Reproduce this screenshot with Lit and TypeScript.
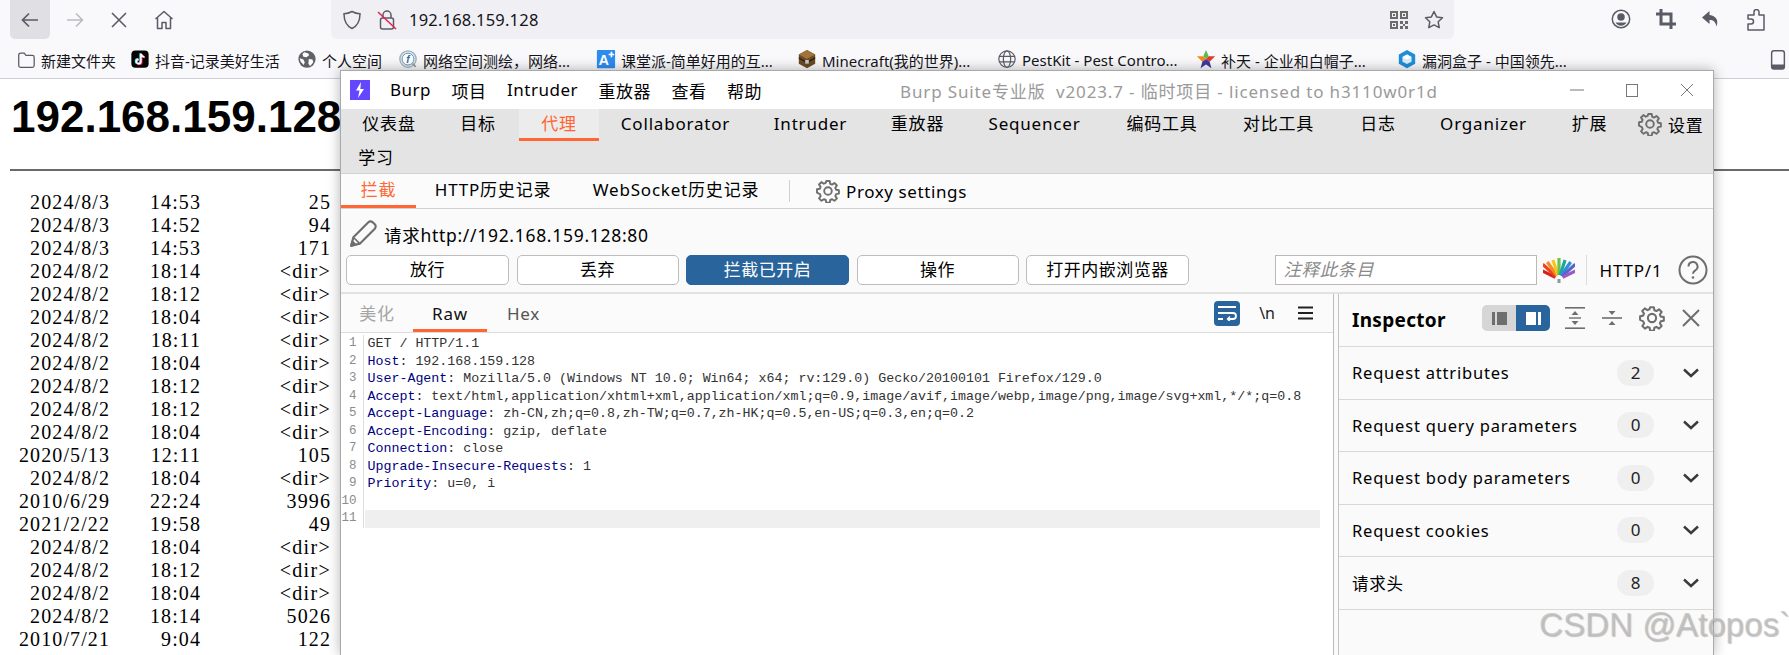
import { LitElement, html, css, svg } from "lit";
import { customElement } from "lit/decorators.js";

const UI = `"Noto Sans", "Noto Sans CJK SC", sans-serif`;

const bookmarks = [
  { icon: "folder", text: "新建文件夹", w: 114 },
  { icon: "tiktok", text: "抖音-记录美好生活", w: 167 },
  { icon: "earth", text: "个人空间", w: 101 },
  { icon: "fofa", text: "网络空间测绘，网络...", w: 198 },
  { icon: "ketang", text: "课堂派-简单好用的互...", w: 201 },
  { icon: "chest", text: "Minecraft(我的世界)...", w: 200 },
  { icon: "globe", text: "PestKit - Pest Contro...", w: 199 },
  { icon: "butian", text: "补天 - 企业和白帽子...", w: 201 },
  { icon: "box", text: "漏洞盒子 - 中国领先...", w: 371 },
  { icon: "phone", text: "移", w: 30 },
];

const listing = [
  ["2024/8/3", "14:53", "25"], ["2024/8/3", "14:52", "94"], ["2024/8/3", "14:53", "171"],
  ["2024/8/2", "18:14", "<dir>"], ["2024/8/2", "18:12", "<dir>"], ["2024/8/2", "18:04", "<dir>"],
  ["2024/8/2", "18:11", "<dir>"], ["2024/8/2", "18:04", "<dir>"], ["2024/8/2", "18:12", "<dir>"],
  ["2024/8/2", "18:12", "<dir>"], ["2024/8/2", "18:04", "<dir>"], ["2020/5/13", "12:11", "105"],
  ["2024/8/2", "18:04", "<dir>"], ["2010/6/29", "22:24", "3996"], ["2021/2/22", "19:58", "49"],
  ["2024/8/2", "18:04", "<dir>"], ["2024/8/2", "18:12", "<dir>"], ["2024/8/2", "18:04", "<dir>"],
  ["2024/8/2", "18:14", "5026"], ["2010/7/21", "9:04", "122"], ["2021/10/22", "16:30", "88"],
];

const mainTabs = [
  ["仪表盘", 96], ["目标", 82], ["代理", 80], ["Collaborator", 153], ["Intruder", 117], ["重放器", 97],
  ["Sequencer", 137], ["编码工具", 118], ["对比工具", 115], ["日志", 84], ["Organizer", 127], ["扩展", 85],
] as [string, number][];

const code: [string, string][] = [
  ["", "GET / HTTP/1.1"],
  ["Host", " 192.168.159.128"],
  ["User-Agent", " Mozilla/5.0 (Windows NT 10.0; Win64; x64; rv:129.0) Gecko/20100101 Firefox/129.0"],
  ["Accept", " text/html,application/xhtml+xml,application/xml;q=0.9,image/avif,image/webp,image/png,image/svg+xml,*/*;q=0.8"],
  ["Accept-Language", " zh-CN,zh;q=0.8,zh-TW;q=0.7,zh-HK;q=0.5,en-US;q=0.3,en;q=0.2"],
  ["Accept-Encoding", " gzip, deflate"],
  ["Connection", " close"],
  ["Upgrade-Insecure-Requests", " 1"],
  ["Priority", " u=0, i"],
  ["", ""],
  ["", ""],
];

const inspectorRows: [string, string][] = [
  ["Request attributes", "2"],
  ["Request query parameters", "0"],
  ["Request body parameters", "0"],
  ["Request cookies", "0"],
  ["请求头", "8"],
];

const gearPath =
  "M10.3 2h3.4l.5 2.8 1.9.8 2.4-1.6 2.4 2.4-1.6 2.4.8 1.9 2.8.5v3.4l-2.8.5-.8 1.9 1.6 2.4-2.4 2.4-2.4-1.6-1.9.8-.5 2.8h-3.4l-.5-2.8-1.9-.8-2.4 1.6-2.4-2.4 1.6-2.4-.8-1.9L1 13.7v-3.4l2.8-.5.8-1.9L3 5.5l2.4-2.4 2.4 1.6 1.9-.8z";

function gear(size: number) {
  return html`<svg width=${size} height=${size} viewBox="0 0 24 24" fill="none" stroke="#6e6e6e" stroke-width="1.9" stroke-linejoin="round"><path d=${gearPath}></path><circle cx="12" cy="12" r="3.8"></circle></svg>`;
}

function favicon(name: string) {
  switch (name) {
    case "folder":
      return svg`<path d="M2 5.5a2 2 0 0 1 2-2h4l2 2.5h7a2 2 0 0 1 2 2v9a2 2 0 0 1-2 2H4a2 2 0 0 1-2-2z" fill="none" stroke="#5b5b66" stroke-width="1.4"/>`;
    case "tiktok":
      return svg`<rect x="0.5" y="0.5" width="19" height="19" rx="4.5" fill="#050505"/>
        <path d="M11 4v8.6a2.5 2.5 0 1 1-2.5-2.5M11 4c.3 2 1.7 3.4 3.8 3.6" fill="none" stroke="#25f4ee" stroke-width="2" transform="translate(-.8 -.4)"/>
        <path d="M11 4v8.6a2.5 2.5 0 1 1-2.5-2.5M11 4c.3 2 1.7 3.4 3.8 3.6" fill="none" stroke="#fe2c55" stroke-width="2" transform="translate(.8 .6)"/>
        <path d="M11 4v8.6a2.5 2.5 0 1 1-2.5-2.5M11 4c.3 2 1.7 3.4 3.8 3.6" fill="none" stroke="#fff" stroke-width="1.7"/>`;
    case "earth":
      return svg`<circle cx="10" cy="10" r="9.5" fill="#5f6368"/>
        <path d="M7 2.5l4 1 1.5 2-3 2.5-3.5-.5-1-3zM12 10l4 .5 1 3-3.5 4-2-2.5zM2 9l4 1.500 1.500 3-1 3L3 13z" fill="#fff"/>`;
    case "fofa":
      return svg`<circle cx="10" cy="10" r="9" fill="#dfe8ee" stroke="#9fb0bb" stroke-width="1.400"/>
        <circle cx="10" cy="10" r="6.500" fill="#fff" stroke="#5e8fb5" stroke-width="1"/>
        <text x="10" y="14" font-size="11" font-weight="700" font-style="italic" text-anchor="middle" font-family="Liberation Sans" fill="#2f6ea5">f</text>
        <path d="M15 15l3.500 3.500" stroke="#9a9a9a" stroke-width="2"/>`;
    case "ketang":
      return svg`<rect width="20" height="20" rx="1" fill="#2d8cf0"/>
        <text x="7.500" y="17" font-size="16" font-weight="700" text-anchor="middle" font-family="Liberation Sans" fill="#fff">A</text>
        <path d="M13 5h6M16 2v6" stroke="#fff" stroke-width="1.800"/>`;
    case "chest":
      return svg`<path d="M10 0l9 5v10l-9 5-9-5V5z" fill="#6b4a24"/><path d="M10 0l9 5-9 5-9-5z" fill="#a0743c"/><path d="M1 8l9 5 9-5v1.500l-9 5-9-5z" fill="#2e1f0f"/><rect x="8" y="11" width="4" height="4" fill="#c8c8c8"/>`;
    case "globe":
      return svg`<g fill="none" stroke="#5b5b66" stroke-width="1.300"><circle cx="10" cy="10" r="9"/><ellipse cx="10" cy="10" rx="4" ry="9"/><path d="M1.500 7h17M1.500 13h17"/></g>`;
    case "butian":
      return svg`<path d="M10 0l3 7-3 3-3-3z" fill="#5cb85c"/><path d="M20 7l-7 0-3 3 4 3z" fill="#e23b2e"/><path d="M0 7h7l3 3-4 3z" fill="#f28a18"/><path d="M6 13l4-3 4 3 2 7-6-4-6 4z" fill="#3f3a9e"/>`;
    case "box":
      return svg`<path d="M10 0l9 5v10l-9 5-9-5V5z" fill="#1f8ed6"/><path d="M10 5l5 2.800v5L10 15.500 5 12.800v-5z" fill="#d6eefb"/><path d="M10 5l5 2.800-5 2.700-5-2.700z" fill="#fff"/>`;
    default:
      return svg`<rect x="3" y="0.800" width="14" height="20" rx="2.500" fill="none" stroke="#5b5b66" stroke-width="1.600"/><path d="M3 16h14v3a2 2 0 0 1-2 2H5a2 2 0 0 1-2-2z" fill="#5b5b66"/>`;
  }
}

function fan() {
  const colors = ["#d8201f", "#f0401f", "#f78a1c", "#f7c61d", "#6cc24a", "#19a7a0", "#2c8fd8", "#5a62c8", "#9b59c4"];
  return html`<svg class="fan" width="32" height="28" viewBox="0 0 32 28">
    ${colors.map((c, i) => {
      const a = ((i - 4) * 16 * Math.PI) / 180;
      const x = 16 + Math.sin(a) * 22;
      const y = 23 - Math.cos(a) * 22;
      const x0 = 16 + Math.sin(a) * 4;
      const y0 = 23 - Math.cos(a) * 4;
      return svg`<line x1=${x0} y1=${y0} x2=${x} y2=${Math.max(y, 2 + Math.abs(i - 4) * 2)} stroke=${c} stroke-width="3.200"/>`;
    })}
    <rect x="14.500" y="23" width="3" height="4" fill="#8a9aa5"></rect>
  </svg>`;
}

@customElement("app-root")
export class AppRoot extends LitElement {
  static styles = css`
    :host { display: block; width: 1789px; height: 655px; overflow: hidden; position: relative; background: #fff; font-family: ${css([UI] as any)}; color: #000; }
    svg { display: block; flex: none; }
    .toolbar { height: 39px; background: #f9f9fb; display: flex; align-items: center; padding-left: 10px; }
    .nav { width: 40px; height: 39px; margin-right: 4.5px; display: flex; align-items: center; justify-content: center; border-radius: 0 0 5px 5px; }
    .nav.on { background: #dfdfe4; }
    .addr { margin-left: 143px; width: 1123px; height: 39px; background: #f0f0f4; border-radius: 0 0 6px 6px; display: flex; align-items: center; padding-left: 11px; box-sizing: border-box; font-size: 16.500px; color: #15141a; }
    .addr .url { margin-left: 12px; flex: 1; letter-spacing: .2px; }
    .addr .end { display: flex; gap: 16px; margin-right: 10px; align-items: center; }
    .right { display: flex; margin-left: 155px; gap: 21px; padding-top: 1px; }
    .right div { width: 24px; display: flex; justify-content: center; }
    .bookmarks { height: 40px; box-sizing: border-box; background: #f9f9fb; border-bottom: 1px solid #cfcfd8; display: flex; align-items: center; padding-left: 16px; font-size: 15px; color: #15141a; overflow: hidden; padding-top: 3px; }
    .bm { display: flex; align-items: center; flex: none; gap: 5px; white-space: nowrap; }
    .page { padding-left: 10px; position: relative; }
    h1 { margin: 0; height: 90px; box-sizing: border-box; padding: 11px 0 0 1px; font: 700 44px/54px "Liberation Sans", sans-serif; white-space: nowrap; }
    hr { margin: 0 0 20px -0px; height: 2px; border: 0; background: #6a6a6a; width: 1779px; }
    .list { display: flex; flex-direction: column; font: 20px/23px "Liberation Serif", serif; letter-spacing: 1.100px; margin-left: -10px; }
    .rowl { display: grid; grid-template-columns: 110px 91px 130px; height: 23px; }
    .rowl span { text-align: right; white-space: pre; }
    .dir { letter-spacing: 1.300px; }

    .win { position: absolute; left: 340px; top: 70px; width: 1374px; height: 585px; box-sizing: border-box; background: #fafafa; border: 1px solid #a9a9a9; border-bottom: 0; box-shadow: 0 0 12px rgba(0,0,0,.3); display: flex; flex-direction: column; border-left-width: 1px; }
    .title { height: 38px; flex: none; background: #fff; display: flex; align-items: center; position: relative; font-size: 17px; letter-spacing: .5px; }
    .logo { margin-left: 9px; width: 20px; height: 20px; background: #6347ff; display: flex; align-items: center; justify-content: center; margin-right: 20px; }
    .menu { display: flex; gap: 20.500px; }
    .wintitle { margin-left: 138px; color: #9a9a9a; white-space: pre; letter-spacing: .85px; }
    .ctl { margin-left: auto; display: flex; align-items: center; gap: 42px; margin-right: 19px; }
    .maintabs { height: 65px; flex: none; background: #e4e4e4; border-bottom: 1px solid #cdd2d2; box-sizing: border-box; font-size: 17px; letter-spacing: .8px; }
    .trow { display: flex; height: 32px; }
    .tab { flex: none; text-align: center; line-height: 30px; box-sizing: border-box; height: 32px; white-space: nowrap; }
    .tab.on { color: #ff6633; border-bottom: 3px solid #ff6633; background: #ececec; }
    .settings { display: flex; align-items: center; margin-left: 6px; gap: 6px; height: 30px; }
    .tab2 { width: 70px; text-align: center; line-height: 32px; margin-top: 1px; }
    .subtabs { height: 35px; flex: none; box-sizing: border-box; border-bottom: 1px solid #cdd2d2; display: flex; align-items: center; font-size: 17px; letter-spacing: .8px; background: #fbfbfb; }
    .st { height: 34px; line-height: 32px; text-align: center; box-sizing: border-box; flex: none; white-space: nowrap; }
    .st.on { color: #ff6633; border-bottom: 3px solid #ff6633; }
    .vsep { width: 1px; height: 22px; background: #d0d0d0; margin: 0 26px 0 7px; }
    .proxy { display: flex; align-items: center; gap: 6px; letter-spacing: .6px; }
    .reqline { height: 46px; flex: none; display: flex; align-items: center; padding-left: 7px; gap: 6px; font-size: 17.500px; letter-spacing: .7px; box-sizing: border-box; padding-top: 4px; }
    .btns { height: 30px; flex: none; display: flex; align-items: center; padding-left: 5px; }
    .btn { height: 30px; box-sizing: border-box; border: 1px solid #bdbdbd; border-radius: 5px; background: #fff; text-align: center; line-height: 28px; font-size: 17px; letter-spacing: .5px; flex: none; margin-right: 7.500px; }
    .btn.on { background: #29659c; color: #fff; border-color: #29659c; }
    .note { margin-left: 78px; width: 262px; height: 30px; box-sizing: border-box; border: 1px solid #bdb8b8; background: #fff; font-style: italic; color: #8a8a8a; font-size: 17.500px; line-height: 27px; padding-left: 8px; letter-spacing: .6px; }
    .fan { margin-left: 6px; }
    .vs2 { width: 1px; height: 30px; background: #dcdcdc; margin: 0 13px 0 11px; }
    .http1 { font-size: 17px; letter-spacing: .8px; margin-right: 16px; }
    .bottom { flex: 1; display: flex; margin-top: 7px; border-top: 2px solid #e2e2e2; min-height: 0; background: #fff; }
    .editor { width: 993px; flex: none; box-sizing: border-box; border-right: 1px solid #bfbaba; display: flex; flex-direction: column; background: #fff; }
    .edhead { height: 38px; flex: none; border-bottom: 1px solid #dcdcdc; display: flex; align-items: center; font-size: 17px; letter-spacing: .8px; background: #fbfbfb; }
    .et { height: 38px; line-height: 40px; text-align: center; box-sizing: border-box; flex: none; color: #222; }
    .et.dim { color: #a5a5a5; }
    .et.hex { color: #555; }
    .et.on { border-bottom: 3px solid #ff6633; color: #111; }
    .edicons { margin-left: auto; display: flex; align-items: center; margin-right: 20px; }
    .wrap { width: 26px; height: 25px; background: #29659c; border-radius: 4px; display: flex; align-items: center; justify-content: center; margin-left: 1px; }
    .nl { margin: 0 23px 0 19px; font-size: 16px; color: #222; letter-spacing: 0; }
    .codewrap { flex: 1; padding-top: 2px; font: 13.300px/17.500px "Liberation Mono", monospace; position: relative; }
    .cl { display: flex; height: 17.500px; white-space: pre; }
    .num { width: 22.500px; flex: none; box-sizing: border-box; text-align: right; padding-right: 6px; color: #8c8c8c; border-right: 1px solid #ddd; font-size: 12.500px; }
    .txt { padding-left: 4px; color: #333; flex: none; }
    .txt b { font-weight: 400; color: #000080; }
    .cl.cur .txt { width: 951px; margin-left: 1px; background: #efefef; }
    .gutter { width: 4px; flex: none; background: #fafafa; border-right: 1px solid #c4c4c4; }
    .insp { flex: 1; background: #fafafa; display: flex; flex-direction: column; min-width: 0; }
    .ihead { height: 53px; box-sizing: border-box; flex: none; border-bottom: 1px solid #d8d8d8; display: flex; align-items: center; padding: 0 0 4px 13px; }
    .ihead strong { font-size: 19px; font-weight: 700; letter-spacing: .3px; width: 130px; margin-top: 4px; }
    .toggle { display: flex; width: 68px; height: 26px; border-radius: 5px; overflow: hidden; flex: none; }
    .toggle div { flex: 1; display: flex; align-items: center; justify-content: center; background: #d6d6d6; }
    .toggle div.on { background: #29659c; }
    .iicons { display: flex; align-items: center; margin-left: 15px; gap: 17px; }
    .irow { height: 52.500px; box-sizing: border-box; flex: none; border-bottom: 1px solid #d8d8d8; display: flex; align-items: center; padding-left: 13px; font-size: 16.500px; letter-spacing: .8px; }
    .irow .lbl { width: 265px; flex: none; white-space: nowrap; }
    .badge { width: 37px; height: 26px; border-radius: 13px; background: #efefef; text-align: center; line-height: 26px; flex: none; font-size: 17px; color: #222; letter-spacing: 0; }
    .chev { margin-left: 29px; }
    .mark { position: absolute; left: 1539px; top: 604px; font: 33px/42px "Liberation Sans", sans-serif; color: rgba(190,190,190,.75); text-shadow: 1px 1px 1px rgba(120,120,120,.45); white-space: pre; letter-spacing: .1px; }
  `;

  render() {
    const stroke = "#5b5b66";
    return html`
      <div class="toolbar">
        <div class="nav on"><svg width="20" height="20" viewBox="0 0 20 20" fill="none" stroke=${stroke} stroke-width="1.700"><path d="M18 10H2.500M9 3.500L2.500 10 9 16.500"></path></svg></div>
        <div class="nav"><svg width="20" height="20" viewBox="0 0 20 20" fill="none" stroke="#b9b9c0" stroke-width="1.500"><path d="M2 10h15.500M11 3.500l6.500 6.500-6.500 6.500"></path></svg></div>
        <div class="nav"><svg width="18" height="18" viewBox="0 0 18 18" fill="none" stroke=${stroke} stroke-width="1.600"><path d="M2 2l14 14M16 2L2 16"></path></svg></div>
        <div class="nav"><svg width="20" height="20" viewBox="0 0 20 20" fill="none" stroke=${stroke} stroke-width="1.500" stroke-linejoin="round"><path d="M1.500 9L10 1.500 18.500 9M3.500 7.500V18.500H8V12.500H12V18.500H16.500V7.500"></path></svg></div>
        <div class="addr">
          <svg width="20" height="20" viewBox="0 0 20 20" fill="none" stroke=${stroke} stroke-width="1.500"><path d="M10 1.500c2.500 1.500 5 2.200 8 2.300 0 7-2 12-8 14.700C4 15.800 2 10.800 2 3.800c3-.1 5.500-.8 8-2.300z"></path></svg>
          <svg style="margin-left:15px" width="20" height="22" viewBox="0 0 20 22" fill="none" stroke=${stroke} stroke-width="1.500"><path d="M6 9V6a4 4 0 0 1 8 0v3"></path><rect x="3.500" y="9" width="13" height="11" rx="2"></rect><path d="M1 3l18 17" stroke="#e22850" stroke-width="1.600"></path></svg>
          <div class="url">192.168.159.128</div>
          <div class="end">
            <svg width="18" height="18" viewBox="0 0 18 18" fill="#6b6b6b"><path d="M0 0h8v8H0zM2 2v4h4V2zM10 0h8v8h-8zM12 2v4h4V2zM0 10h8v8H0zM2 12v4h4v-4zM3 3h2v2H3zM13 3h2v2h-2zM3 13h2v2H3zM10 10h3v3h-3zM15 10h3v3h-3zM10 15h3v3h-3zM15 15h3v3h-3zM13 13h2v2h-2z" fill-rule="evenodd"></path></svg>
            <svg width="20" height="20" viewBox="0 0 20 20" fill="none" stroke=${stroke} stroke-width="1.500" stroke-linejoin="round"><path d="M10 1.500l2.600 5.400 5.900.8-4.300 4.100 1 5.900L10 14.900l-5.200 2.800 1-5.900L1.500 7.700l5.900-.8z"></path></svg>
          </div>
        </div>
        <div class="right">
          <div><svg width="20" height="20" viewBox="0 0 20 20" fill="none" stroke=${stroke} stroke-width="1.500"><circle cx="10" cy="10" r="8.700"></circle><circle cx="10" cy="8" r="3" fill=${stroke}></circle><path d="M4.500 13.500h11c-1 2-3 3.200-5.500 3.200s-4.500-1.200-5.500-3.200z" fill=${stroke} stroke="none"></path></svg></div>
          <div><svg width="20" height="20" viewBox="0 0 20 20" fill="none" stroke=${stroke} stroke-width="3"><path d="M5 0v15h15M0 5h15v15"></path></svg></div>
          <div><svg width="20" height="20" viewBox="0 0 20 20" fill=${stroke}><path d="M8.500 2L1 8.500 8.500 15v-4c4 0 6 1.500 7 6.500 2-5.500.5-10.500-7-11.500z"></path></svg></div>
          <div><svg width="20" height="22" viewBox="0 0 20 22" fill="none" stroke=${stroke} stroke-width="1.500" stroke-linejoin="round"><path d="M2 6h6V3a2.500 2.500 0 0 1 5 0v3h5v15H2v-6h3a2 2 0 0 0 0-5H2z"></path></svg></div>
        </div>
      </div>
      <div class="bookmarks">
        ${bookmarks.map((b) => html`<div class="bm" style="width:${b.w}px"><svg width="20" height="20" viewBox="0 0 20 22">${favicon(b.icon)}</svg><span>${b.text}</span></div>`)}
      </div>
      <div class="page">
        <h1>192.168.159.128</h1>
        <hr />
        <div class="list">
          ${listing.map((r) => html`<div class="rowl"><span>${r[0]}</span><span>${r[1]}</span><span class=${r[2] === "<dir>" ? "dir" : ""}>${r[2]}</span></div>`)}
        </div>
      </div>

      <div class="win">
        <div class="title">
          <div class="logo"><svg width="12" height="16" viewBox="0 0 12 16" fill="#fff"><path d="M7 0L2 8.500h3.500L4 16l6-9H6.300z"></path></svg></div>
          <div class="menu"><span>Burp</span><span>项目</span><span>Intruder</span><span>重放器</span><span>查看</span><span>帮助</span></div>
          <div class="wintitle">Burp Suite专业版  v2023.7 - 临时项目 - licensed to h3110w0r1d</div>
          <div class="ctl">
            <svg width="14" height="14" viewBox="0 0 14 14" stroke="#777" fill="none"><path d="M0 7h14"></path></svg>
            <svg width="12" height="13" viewBox="0 0 12 13" stroke="#777" fill="none"><rect x=".5" y=".5" width="11" height="12"></rect></svg>
            <svg width="14" height="14" viewBox="0 0 14 14" stroke="#777" fill="none"><path d="M1 1l12 12M13 1L1 13"></path></svg>
          </div>
        </div>
        <div class="maintabs">
          <div class="trow">
            ${mainTabs.map(([t, w]) => html`<div class="tab ${t === "代理" ? "on" : ""}" style="width:${w}px">${t}</div>`)}
            <div class="settings">${gear(24)}<span>设置</span></div>
          </div>
          <div class="tab2">学习</div>
        </div>
        <div class="subtabs">
          <div class="st on" style="width:75px">拦截</div>
          <div class="st" style="width:154px">HTTP历史记录</div>
          <div class="st" style="width:212px">WebSocket历史记录</div>
          <div class="vsep"></div>
          <div class="proxy">${gear(24)}<span>Proxy settings</span></div>
        </div>
        <div class="reqline">
          <svg width="30" height="30" viewBox="0 0 28 28" fill="none" stroke="#6e6e6e" stroke-width="2" stroke-linejoin="round"><path d="M3 25l2-8L19 3a2.800 2.800 0 0 1 4 0l2 2a2.800 2.800 0 0 1 0 4L11 23z"></path><path d="M5 17l6 6" stroke-width="1.500"></path><path d="M3 25l1-4 3 3z" fill="#6e6e6e"></path></svg>
          <span>请求http://192.168.159.128:80</span>
        </div>
        <div class="btns">
          <div class="btn" style="width:163px">放行</div>
          <div class="btn" style="width:162px">丢弃</div>
          <div class="btn on" style="width:163px">拦截已开启</div>
          <div class="btn" style="width:162px">操作</div>
          <div class="btn" style="width:163px">打开内嵌浏览器</div>
          <div class="note">注释此条目</div>
          ${fan()}
          <div class="vs2"></div>
          <div class="http1">HTTP/1</div>
          <svg width="30" height="30" viewBox="0 0 30 30" fill="none" stroke="#6e6e6e" stroke-width="2"><circle cx="15" cy="15" r="13.500"></circle><path d="M10.500 11.500a4.500 4.500 0 1 1 6.800 3.800c-1.500 1-2.300 1.700-2.300 3.500"></path><circle cx="15" cy="22.500" r="1.300" fill="#6e6e6e" stroke="none"></circle></svg>
        </div>
        <div class="bottom">
          <div class="editor">
            <div class="edhead">
              <div class="et dim" style="width:72px">美化</div>
              <div class="et on" style="width:74px">Raw</div>
              <div class="et hex" style="width:73px">Hex</div>
              <div class="edicons">
                <div class="wrap"><svg width="20" height="16" viewBox="0 0 20 16" fill="none" stroke="#fff" stroke-width="1.800"><path d="M1 2h18M1 8h15a2.500 2.500 0 0 1 0 6h-5M1 14h5"></path><path d="M13 11.500L10.500 14l2.500 2.500" stroke-width="1.400"></path></svg></div>
                <div class="nl">\\n</div>
                <svg width="15" height="14" viewBox="0 0 15 14" stroke="#222" stroke-width="1.800"><path d="M0 1.500h15M0 7h15M0 12.500h15"></path></svg>
              </div>
            </div>
            <div class="codewrap">
              ${code.map(([k, v], i) => html`<div class="cl ${i === 10 ? "cur" : ""}"><div class="num">${i + 1}</div><div class="txt">${k ? html`<b>${k}</b>:${v}` : v}</div></div>`)}
            </div>
          </div>
          <div class="gutter"></div>
          <div class="insp">
            <div class="ihead">
              <strong>Inspector</strong>
              <div class="toggle">
                <div><svg width="15" height="13" viewBox="0 0 15 13" fill="#6e6e6e"><rect width="3" height="13"></rect><rect x="5" width="10" height="13"></rect></svg></div>
                <div class="on"><svg width="15" height="13" viewBox="0 0 15 13" fill="#fff"><rect width="10" height="13"></rect><rect x="12" width="3" height="13"></rect></svg></div>
              </div>
              <div class="iicons">
                <svg width="20" height="22" viewBox="0 0 20 22" fill="#6e6e6e"><rect y="0" width="20" height="1.600"></rect><rect y="20.400" width="20" height="1.600"></rect><rect x="4" y="10.300" width="12" height="1.400"></rect><path d="M10 4l3.500 4h-7zM10 18l-3.500-4h7z"></path></svg>
                <svg width="20" height="22" viewBox="0 0 20 22" fill="#6e6e6e"><rect y="10.200" width="20" height="1.600"></rect><path d="M10 8L6.500 4h7zM10 14l3.500 4h-7z"></path></svg>
                ${gear(26)}
                <svg width="20" height="20" viewBox="0 0 20 20" stroke="#6e6e6e" stroke-width="2" style="margin-left:-1px"><path d="M2 2l16 16M18 2L2 18"></path></svg>
              </div>
            </div>
            ${inspectorRows.map(([l, n]) => html`<div class="irow"><span class="lbl">${l}</span><span class="badge">${n}</span>
              <svg class="chev" width="16" height="10" viewBox="0 0 16 10" fill="none" stroke="#3a3a3a" stroke-width="2.400"><path d="M1 1.500l7 6.500 7-6.500"></path></svg></div>`)}
          </div>
        </div>
      </div>
      <div class="mark">CSDN @Atopos\`</div>
    `;
  }
}
